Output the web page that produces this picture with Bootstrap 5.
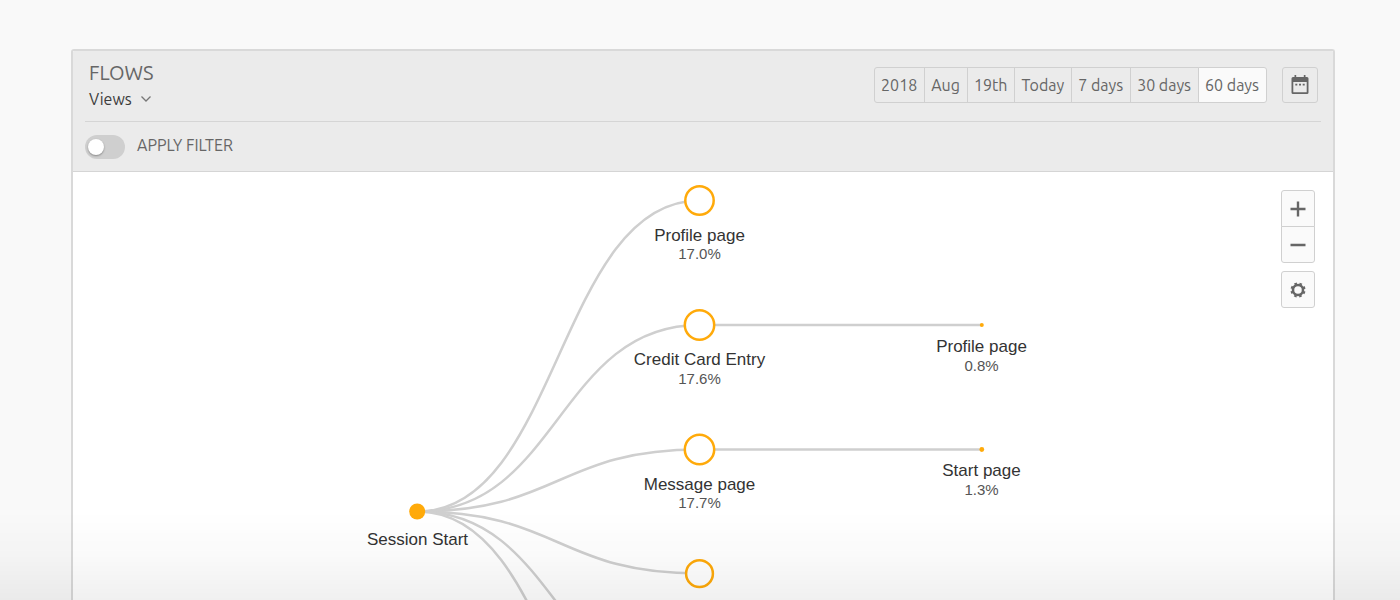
<!DOCTYPE html>
<html lang="en">
<head>
<meta charset="utf-8">
<meta name="viewport" content="width=device-width, initial-scale=1">
<title>Flows</title>
<link href="https://cdn.jsdelivr.net/npm/bootstrap@5.3.0/dist/css/bootstrap.min.css" rel="stylesheet">
<style>
  body { background: #f9f9f9; color: #666; font-family: Ubuntu, "Noto Sans", sans-serif; font-size: 16px; line-height: 24px; }
  .page { padding: 49px 65px 0 71px; }
  .panel { border: 2px solid #d9d9d9; border-bottom: 0; border-radius: 3px 3px 0 0; background: #fff; }
  .panel-head { background: #ebebeb; border-bottom: 1px solid #d5d5d5; padding: 0 12px; }
  .head-main { height: 71px; padding: 0 3px 2px 4px; border-bottom: 1px solid #d5d5d5; }
  .head-filter { height: 49px; }
  .title { font-size: 20px; line-height: 28px; font-weight: 400; }
  .views { font-size: 16px; line-height: 24px; color: #3c3c3c; padding: 0; border: 0; background: none; }
  .btn-tool { --bs-btn-color: #666; --bs-btn-bg: #ebebeb; --bs-btn-border-color: #d0d0d0; --bs-btn-border-radius: 3px;
    --bs-btn-hover-color: #444; --bs-btn-hover-bg: #f4f4f4; --bs-btn-hover-border-color: #c4c4c4;
    --bs-btn-active-color: #666; --bs-btn-active-bg: #fafafa; --bs-btn-active-border-color: #d0d0d0;
    --bs-btn-padding-y: 5px; --bs-btn-font-size: 16px; --bs-btn-line-height: 24px; padding-left: 6px; padding-right: 7px; }
  .head-tools { gap: 15px; }
  .btn-square { width: 36px; height: 36px; padding: 0; }
  .btn-zoom { --bs-btn-bg: #fafafa; width: 34px; height: 37px; padding: 0; }
  .form-switch .filter-toggle { width: 40px; height: 24px; margin: 0; border: 0; background-color: #cfcfcf;
    background-image: none; position: relative; }
  .filter-toggle::before { content: ""; position: absolute; left: 3px; top: 4px; width: 16px; height: 16px;
    border-radius: 50%; background: #fff; box-shadow: 0 1px 2px rgba(0,0,0,.35); }
  .filter-toggle:checked::before { left: 21px; }
  .form-check-label { padding-bottom: 3px; }
  .canvas-tools { top: 18px; right: 18px; }
  .flow-chart { font-family: "Liberation Sans", Arial, sans-serif; text-anchor: middle; }
  .links { fill: none; stroke: #cfcfcf; stroke-width: 2.5; }
  .nodes { fill: #fff; stroke: #ffaa0a; stroke-width: 2.5; }
  .dots { fill: #ffaa0a; }
  .names { font-size: 17px; fill: #333; }
  .shares { font-size: 15px; fill: #555; }
  .fade-out { height: 90px; pointer-events: none; background: linear-gradient(rgba(0,0,0,0), rgba(0,0,0,.02) 50%, rgba(0,0,0,.06)); }
</style>
</head>
<body class="vh-100 overflow-hidden">
<main class="page vh-100 d-flex flex-column">
  <section class="panel flex-grow-1 d-flex flex-column overflow-hidden">
    <header class="panel-head">
      <div class="head-main d-flex justify-content-between align-items-center">
        <div>
          <h1 class="title m-0">FLOWS</h1>
          <button type="button" class="views d-flex align-items-center gap-2">Views
            <svg width="12" height="8" viewBox="0 0 12 8" fill="none" stroke="#777" stroke-width="1.3" aria-hidden="true"><path d="M1.500 1.500 6 6l4.500-4.500"/></svg>
          </button>
        </div>
        <div class="head-tools d-flex">
          <div class="btn-group" role="group" aria-label="Date range">
            <button type="button" class="btn btn-tool">2018</button>
            <button type="button" class="btn btn-tool">Aug</button>
            <button type="button" class="btn btn-tool">19th</button>
            <button type="button" class="btn btn-tool">Today</button>
            <button type="button" class="btn btn-tool">7 days</button>
            <button type="button" class="btn btn-tool">30 days</button>
            <button type="button" class="btn btn-tool active">60 days</button>
          </div>
          <button type="button" class="btn btn-tool btn-square d-flex align-items-center justify-content-center" aria-label="Pick dates">
            <svg width="18" height="20" viewBox="0 0 18 20" aria-hidden="true"><path fill="#666" fill-rule="evenodd" d="M3.500 0h1.700v2h7.600V0h1.700v2H16a1.500 1.500 0 0 1 1.500 1.500v14A1.500 1.500 0 0 1 16 19H2a1.500 1.500 0 0 1-1.500-1.500v-14A1.500 1.500 0 0 1 2 2h1.500zM2.300 7v10.300h13.400V7z"/><path fill="#666" d="M4.300 8.800h2v1.700h-2zM8 8.800h2v1.700H8zM11.700 8.800h2v1.700h-2z"/></svg>
          </button>
        </div>
      </div>
      <div class="head-filter form-check form-switch d-flex align-items-center m-0 p-0 gap-2">
        <input class="form-check-input filter-toggle" type="checkbox" role="switch" id="filter">
        <label class="form-check-label ms-1" for="filter">APPLY FILTER</label>
      </div>
    </header>
    <div class="flex-grow-1 position-relative overflow-hidden">
      <svg class="flow-chart d-block w-100" viewBox="72.500 172 1260 720" role="img" aria-label="Page flow from session start">
        <g class="links">
          <path d="M417 511.500C558 511.500 558 200.500 699 200.500"/>
          <path d="M417 511.500C558 511.500 558 325 699 325"/>
          <path d="M417 511.500C558 511.500 558 449.500 699 449.500"/>
          <path d="M417 511.500C558 511.500 558 573.500 699 573.500"/>
          <path d="M417 511.500C558 511.500 558 698 699 698"/>
          <path d="M417 511.500C558 511.500 558 822.500 699 822.500"/>
          <path d="M699 325H981M699 449.500H981"/>
        </g>
        <g class="nodes">
          <circle cx="699" cy="200.500" r="14.200"/>
          <circle cx="699" cy="325" r="14.700"/>
          <circle cx="699" cy="449.500" r="14.700"/>
          <circle cx="699" cy="573.700" r="13.400"/>
        </g>
        <g class="dots">
          <circle cx="416.700" cy="511.500" r="8"/>
          <circle cx="981.300" cy="325" r="2"/>
          <circle cx="981.300" cy="449.500" r="2.400"/>
        </g>
        <g class="names">
          <text x="417" y="545">Session Start</text>
          <text x="699" y="241">Profile page</text>
          <text x="699" y="365">Credit Card Entry</text>
          <text x="699" y="490">Message page</text>
          <text x="981" y="352">Profile page</text>
          <text x="981" y="476">Start page</text>
        </g>
        <g class="shares">
          <text x="699" y="259">17.0%</text>
          <text x="699" y="384">17.6%</text>
          <text x="699" y="508">17.7%</text>
          <text x="981" y="371">0.8%</text>
          <text x="981" y="495">1.3%</text>
        </g>
      </svg>
      <div class="canvas-tools position-absolute d-flex flex-column gap-2">
        <div class="btn-group-vertical" role="group" aria-label="Zoom">
          <button type="button" class="btn btn-tool btn-zoom d-flex align-items-center justify-content-center" aria-label="Zoom in">
            <svg width="16" height="16" viewBox="0 0 16 16" stroke="#666" stroke-width="2.400" aria-hidden="true"><path d="M.5 8h15M8 .5v15"/></svg>
          </button>
          <button type="button" class="btn btn-tool btn-zoom d-flex align-items-center justify-content-center" aria-label="Zoom out">
            <svg width="16" height="16" viewBox="0 0 16 16" stroke="#666" stroke-width="2.600" aria-hidden="true"><path d="M.5 8h15"/></svg>
          </button>
        </div>
        <button type="button" class="btn btn-tool btn-zoom d-flex align-items-center justify-content-center" aria-label="Settings">
          <svg width="16" height="16" viewBox="-8 -8 16 16" fill="none" stroke="#666" aria-hidden="true"><circle r="5" stroke-width="2.500"/><circle r="6.600" stroke-width="1.900" stroke-dasharray="2.600 2.584" stroke-dashoffset="-1.292"/></svg>
        </button>
      </div>
    </div>
  </section>
</main>
<div class="fade-out fixed-bottom"></div>
<script src="https://cdn.jsdelivr.net/npm/bootstrap@5.3.0/dist/js/bootstrap.bundle.min.js"></script>
</body>
</html>
